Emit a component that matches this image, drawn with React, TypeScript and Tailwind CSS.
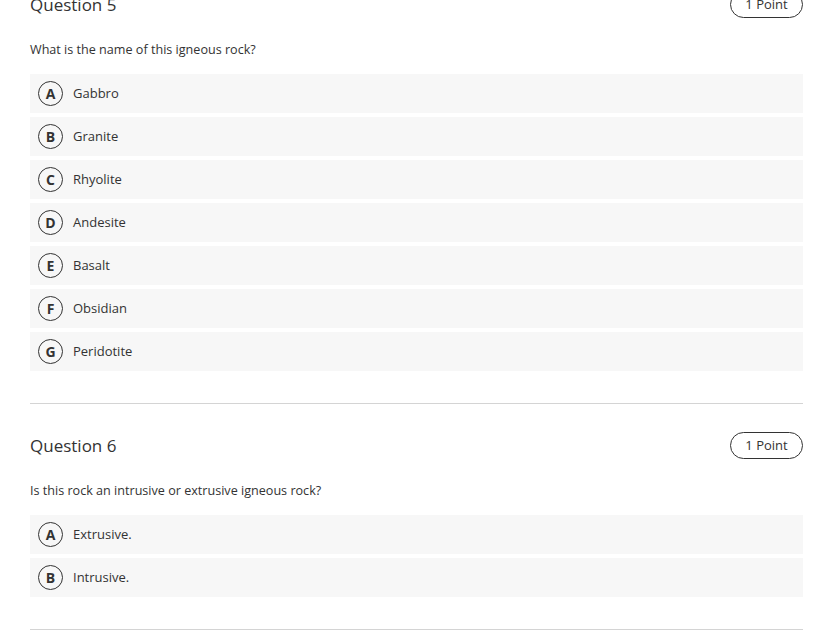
const questions = [
  {
    title: 'Question 5',
    points: '1 Point',
    prompt: 'What is the name of this igneous rock?',
    options: ['Gabbro', 'Granite', 'Rhyolite', 'Andesite', 'Basalt', 'Obsidian', 'Peridotite'],
  },
  {
    title: 'Question 6',
    points: '1 Point',
    prompt: 'Is this rock an intrusive or extrusive igneous rock?',
    options: ['Extrusive.', 'Intrusive.'],
  },
];

const letters = ['A', 'B', 'C', 'D', 'E', 'F', 'G'];

function Question({ title, points, prompt, options }: (typeof questions)[number]) {
  return (
    <section>
      <div className="flex h-[27px] items-center justify-between">
        <h2 className="text-[17px] leading-none text-[#333]">{title}</h2>
        <span className="flex h-[27px] w-[73px] items-center justify-center rounded-full border border-[#333] text-[13px] text-[#333]">
          {points}
        </span>
      </div>
      <p className="mt-[23px] text-[12.6px] leading-[18px] text-[#333]">{prompt}</p>
      <ul className="mt-[15px] flex flex-col gap-[4px]">
        {options.map((opt, i) => (
          <li key={opt} className="flex h-[39px] items-center gap-[10px] bg-[#f7f7f7] pl-[8px]">
            <span className="flex h-[25px] w-[25px] items-center justify-center rounded-full border border-[#333] text-[14px] font-bold text-[#333]">
              {letters[i]}
            </span>
            <span className="text-[13px] font-medium text-[#333]">{opt}</span>
          </li>
        ))}
      </ul>
      <div className="mt-[32px] border-t border-[#d4d4d4]" />
    </section>
  );
}

export default function App() {
  return (
    <div className="h-[631px] overflow-hidden bg-white" style={{ fontFamily: '"Open Sans", "Liberation Sans", sans-serif' }}>
      <div className="-mt-[9px] ml-[30px] flex w-[773px] flex-col gap-[28px]">
        {questions.map((q) => (
          <Question key={q.title} {...q} />
        ))}
      </div>
    </div>
  );
}
